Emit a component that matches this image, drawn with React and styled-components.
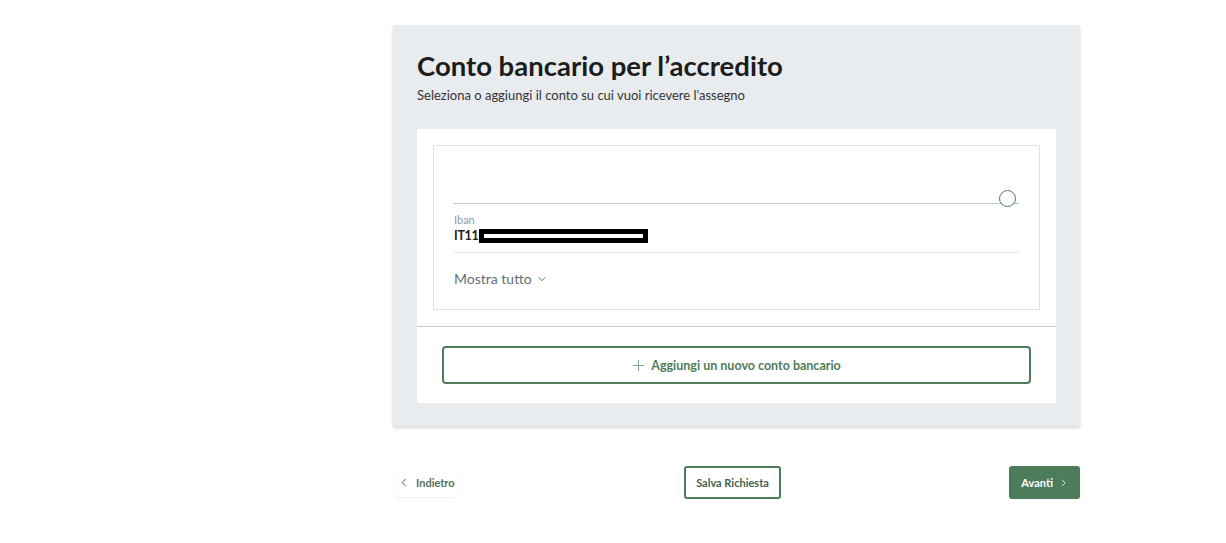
import styled, { createGlobalStyle } from "styled-components";

const GREEN = "#4d7c5a";

const GlobalStyle = createGlobalStyle`
  body {
    margin: 0;
    background: #ffffff;
    font-family: Lato, "Open Sans", sans-serif;
    color: #1a1a1a;
  }
`;

const Page = styled.div`
  display: grid;
  grid-template-columns: 393px 687px;
  padding-top: 25px;
`;

const Main = styled.main`
  grid-column: 2;
`;

const Card = styled.section`
  background: #e9ecef;
  padding: 24px 24px 23px;
  box-shadow: 0 2px 3px rgba(0, 0, 0, 0.16);
`;

const Title = styled.h1`
  margin: 0;
  font-size: 27.5px;
  line-height: 1.2;
  font-weight: 700;
  color: #1c1c1c;
`;

const Subtitle = styled.p`
  margin: 4px 0 0;
  font-size: 13px;
  line-height: 18px;
  color: #333;
`;

const Panel = styled.div`
  margin-top: 25px;
  background: #fff;
`;

const PanelTop = styled.div`
  padding: 16px;
  border-bottom: 1px solid #c6c9cc;
`;

const PanelBottom = styled.div`
  padding: 19px 25px 19px;
`;

const AccountBox = styled.div`
  border: 1px solid #e2e3ea;
  padding: 0 20px 20px;
`;

const SelectRow = styled.div`
  position: relative;
  height: 57px;
  border-bottom: 1px solid #c5c7c9;
`;

const Radio = styled.span`
  position: absolute;
  right: 3px;
  bottom: -4px;
  width: 15px;
  height: 15px;
  border: 1.2px solid ${GREEN};
  border-radius: 50%;
  background: #fff;
`;

const Field = styled.div`
  padding: 9px 0 7px;
  border-bottom: 1px solid #e3e4e6;
`;

const Label = styled.div`
  font-size: 11px;
  line-height: 14px;
  color: #8c9bb0;
`;

const Value = styled.div`
  display: flex;
  align-items: center;
  font-size: 12.5px;
  letter-spacing: -0.3px;
  line-height: 18px;
  font-weight: 700;
  color: #1d1d1d;
`;

const Redacted = styled.span`
  display: inline-block;
  width: 159px;
  height: 4px;
  background: #fff;
  border: 5px solid #000;
`;

const ShowAll = styled.button`
  margin-top: 16px;
  padding: 0;
  border: 0;
  background: none;
  display: flex;
  align-items: center;
  gap: 5px;
  font-family: inherit;
  font-size: 14px;
  line-height: 20px;
  color: #5f6f7c;
`;

const AddButton = styled.button`
  width: 100%;
  height: 38px;
  border: 2px solid ${GREEN};
  border-radius: 4px;
  background: #fff;
  display: flex;
  align-items: center;
  justify-content: center;
  gap: 6px;
  font-family: inherit;
  font-size: 12.5px;
  font-weight: 700;
  color: ${GREEN};
`;

const Nav = styled.nav`
  margin-top: 40px;
  display: flex;
  justify-content: space-between;
  align-items: center;
`;

const BackLink = styled.button`
  display: flex;
  align-items: center;
  gap: 6px;
  height: 28px;
  padding: 0 1px 0 4px;
  margin-left: 2px;
  border: 0;
  border-radius: 4px;
  background: #fff;
  box-shadow: 0 1px 2px rgba(0, 0, 0, 0.08);
  font-family: inherit;
  font-size: 11px;
  font-weight: 700;
  color: #4f7062;
`;

const NavButton = styled.button`
  height: 33px;
  padding: 0 10px;
  border: 2px solid ${GREEN};
  border-radius: 3px;
  background: ${(p) => (p.$primary ? GREEN : "#fff")};
  color: ${(p) => (p.$primary ? "#fff" : "#44604f")};
  display: flex;
  align-items: center;
  gap: 5px;
  font-family: inherit;
  font-size: 11px;
  font-weight: 700;
`;

const Chevron = ({ dir = "down", color = "currentColor", size = 10 }) => {
  const d = {
    down: "M2 4l4 4 4-4",
    left: "M7.5 2l-4 4 4 4",
    right: "M4.5 2l4 4-4 4",
  }[dir];
  return (
    <svg width={size} height={size} viewBox="0 0 12 12" fill="none">
      <path d={d} stroke={color} strokeWidth="1.2" />
    </svg>
  );
};

const Plus = () => (
  <svg width="13" height="13" viewBox="0 0 13 13" fill="none">
    <path d="M6.5 1v11M1 6.5h11" stroke="#8aa593" strokeWidth="1.1" />
  </svg>
);

export default function App() {
  return (
    <>
      <GlobalStyle />
      <Page>
        <Main>
          <Card>
            <Title>Conto bancario per l’accredito</Title>
            <Subtitle>
              Seleziona o aggiungi il conto su cui vuoi ricevere l'assegno
            </Subtitle>
            <Panel>
              <PanelTop>
                <AccountBox>
                  <SelectRow>
                    <Radio />
                  </SelectRow>
                  <Field>
                    <Label>Iban</Label>
                    <Value>
                      IT11
                      <Redacted />
                    </Value>
                  </Field>
                  <ShowAll>
                    Mostra tutto
                    <Chevron dir="down" color={GREEN} size={10} />
                  </ShowAll>
                </AccountBox>
              </PanelTop>
              <PanelBottom>
                <AddButton>
                  <Plus />
                  Aggiungi un nuovo conto bancario
                </AddButton>
              </PanelBottom>
            </Panel>
          </Card>
          <Nav>
            <BackLink>
              <Chevron dir="left" color="#8a969e" size={11} />
              Indietro
            </BackLink>
            <NavButton>Salva Richiesta</NavButton>
            <NavButton $primary>
              Avanti
              <Chevron dir="right" color="#cfe0d4" size={10} />
            </NavButton>
          </Nav>
        </Main>
      </Page>
    </>
  );
}
